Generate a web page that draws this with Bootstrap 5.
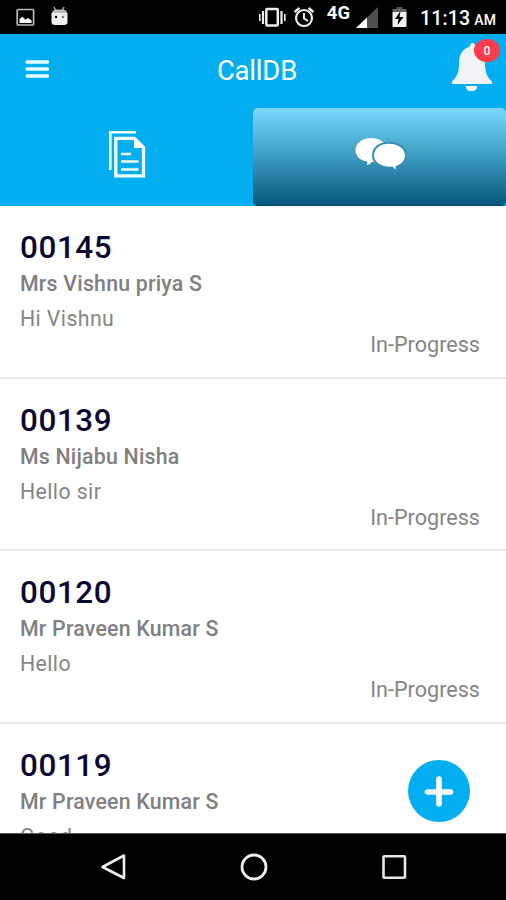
<!DOCTYPE html>
<html lang="en">
<head>
<meta charset="utf-8">
<meta name="viewport" content="width=device-width, initial-scale=1">
<title>CallDB</title>
<link href="https://cdn.jsdelivr.net/npm/bootstrap@5.3.0/dist/css/bootstrap.min.css" rel="stylesheet">
<style>
body { font-family: Roboto, "Liberation Sans", sans-serif; height: 900px; line-height: 1; }
svg { display: block; flex: none; }
.status-bar { height: 34px; padding: 0 10px 0 16px; }
.status-left { gap: 16px; padding-top: 5px; }
.net { font-size: 18.5px; font-weight: 700; line-height: 20px; margin: 3px 5px 0 12px; }
.clock { font-size: 19.6px; font-weight: 500; line-height: 24px; margin: 7px 0 0 13px; letter-spacing: .1px; }
.clock span { font-size: 14px; margin-left: -1px; }
.app-bar { height: 74px; background: #02aeef; padding: 0 6px 0 25px; }
.app-title { font-size: 27.5px; line-height: 74px; letter-spacing: -.2px; padding-left: 15px; }
.bell-btn { width: 50px; height: 52px; margin-top: 5px; }
.count { top: 0; right: 0; width: 26px; height: 23px; background: #fc3d4b; font-size: 12px; font-weight: 500; border-radius: 50%; }
.tab-bar { height: 98px; background: #02aeef; }
.tab-on { background: linear-gradient(#7bd8fb 0, #6bcbee 12%, #3f9fc4 47%, #23799c 75%, #075b80 97%, #064a6b); border-radius: 5px; }
.calls { min-height: 0; }
.call { height: 172.6px; flex: none; padding: 24px 26px 0 20px; border-bottom: 2px solid #e8e8e8; color: #808080; }
.call-id { font-size: 31.4px; line-height: 36px; font-weight: 500; color: #0b0733; letter-spacing: .6px; }
.call-name { font-size: 21.3px; line-height: 26px; margin-top: 5px; font-weight: 500; letter-spacing: .22px; }
.call-text { font-size: 21.3px; line-height: 26px; margin-top: 9px; font-weight: 400; color: #858585; letter-spacing: .4px; }
.call-state { font-size: 21.6px; line-height: 26px; color: #858585; }
.add { right: 36px; bottom: 11px; width: 62px; height: 62px; background: #02aeef; }
.nav-keys { height: 67px; border-top: 1px solid #555; padding: 0 98px 0 100px; }
</style>
<script src="https://cdn.jsdelivr.net/npm/bootstrap@5.3.0/dist/js/bootstrap.bundle.min.js"></script>
</head>
<body class="d-flex flex-column overflow-hidden bg-white">
<header class="flex-shrink-0">
  <div class="status-bar d-flex bg-black text-white">
    <div class="status-left d-flex me-auto">
      <svg width="19" height="22" viewBox="0 0 19 22"><rect x="1.2" y="4.5" width="16.4" height="15.5" rx="1" fill="none" stroke="#b9b9b9" stroke-width="1.7"/><path d="M3.5 18v-4l3-2.2 3 3 2.5-1.7 3.6 2.4V18z" fill="#fff"/></svg>
      <svg width="17" height="22" viewBox="0 0 17 22"><path d="M3 2l2 4M13 2l-2 4" stroke="#aaa" stroke-width="1.5"/><path d="M1 8q0-3 4-3.500h7q4 .5 4 3.500z" fill="#bbb"/><path d="M.5 8h16v9q0 3-3.500 3H4q-3.500 0-3.500-3z" fill="#eee"/><circle cx="5" cy="12" r="1.2"/><circle cx="12" cy="12" r="1.200" fill="#777"/></svg>
    </div>
    <svg width="56" height="34" viewBox="0 0 56 34" fill="none" stroke="#eee"><rect x="7.300" y="9" width="11.500" height="16.500" rx="1" stroke-width="2.500"/><path d="M4 11v13M22.500 11v13" stroke-width="2.200"/><path d="M.8 14v7M25.800 14v7" stroke-width="1.600"/><circle cx="45" cy="18" r="8" stroke-width="2.200"/><path d="M45 13v5.500l4 2.500" stroke-width="2"/><path d="M35.500 12l5-4M54.500 12l-5-4" stroke-width="2.300"/></svg>
    <span class="net">4G</span>
    <svg width="23" height="34" viewBox="0 0 23 34"><path d="M1 28L23 7v21z" fill="#505050"/><path d="M1 28l11-10.500V28z" fill="#fff"/></svg>
    <svg width="29" height="34" viewBox="0 0 29 34"><path d="M18.500 7h6v3h-6z" fill="#555"/><path d="M14.500 9h14v3h-14z" fill="#666"/><path d="M14.500 12h14v14q0 1-1 1h-12q-1 0-1-1z" fill="#f1f1f1"/><path d="M22.500 11l-5.500 8h3.500l-1 6 6-8h-4z" fill="#000"/></svg>
    <div class="clock text-nowrap">11:13 <span>AM</span></div>
  </div>
  <div class="app-bar d-flex text-white">
    <svg width="24" height="74" viewBox="0 0 24 74" stroke="#e8ffff" stroke-width="3.400" stroke-linecap="round"><path d="M2 28h20.500M2 35h20.500M2 42h20.500"/></svg>
    <div class="app-title flex-fill text-center">CallDB</div>
    <div class="bell-btn position-relative">
      <svg width="50" height="52" viewBox="0 0 50 52" fill="#eff3f5"><path d="M22.500 4q2.500 0 2.500 3.500c7 2 10 8 10 16 0 11 2 14 7 19v2.500H2v-2.500c5-5 7-8 7-19 0-8 4-14 11-16Q20 4 22.500 4zM15.500 47h12q-1 5.500-6 5.500t-6-5.500z"/></svg>
      <span class="count position-absolute d-flex align-items-center justify-content-center">0</span>
    </div>
  </div>
  <nav class="tab-bar d-flex">
    <div class="w-50 d-flex align-items-center justify-content-center">
      <svg width="38" height="54" viewBox="0 0 38 54" fill="none" stroke="#f2ffff"><path d="M2.300 40V2.200H28" stroke-width="2.600"/><path d="M7.800 8.300h18.700l9 9.200v28.300H7.800z" stroke-width="3.300"/><path d="M26 8v10h10z" fill="#fff" stroke="none"/><path d="M13 24h10M13 31.500h17.500M13 39.500h17.500" stroke-width="2.600"/></svg>
    </div>
    <div class="tab-on w-50 d-flex align-items-center justify-content-center">
      <svg width="52" height="42" viewBox="0 0 52 42" fill="#fff"><path d="M17.500 2C26 2 33 7 33 14s-7 12-15 12c-1 0-1.500 2.500-5 3l.5-3.500C6 24.500 1.500 20 1.500 14 1.500 7 8.500 2 17.500 2z"/><path d="M35 6.700c9 0 17 5 17 12.800 0 5.500-4 10-9.500 11.500l1 4c-3-.8-4.500-2.500-5.500-3.500-10 1-19-4-19-12s7-12.800 16-12.800z" stroke="#358eb2" stroke-width="2"/></svg>
    </div>
  </nav>
</header>
<main class="calls flex-fill position-relative overflow-hidden d-flex flex-column">
  <section class="call"><div class="call-id">00145</div><div class="call-name">Mrs Vishnu priya S</div><div class="call-text">Hi Vishnu</div><div class="call-state text-end">In-Progress</div></section>
  <section class="call"><div class="call-id">00139</div><div class="call-name">Ms Nijabu Nisha</div><div class="call-text">Hello sir</div><div class="call-state text-end">In-Progress</div></section>
  <section class="call"><div class="call-id">00120</div><div class="call-name">Mr Praveen Kumar S</div><div class="call-text">Hello</div><div class="call-state text-end">In-Progress</div></section>
  <section class="call"><div class="call-id">00119</div><div class="call-name">Mr Praveen Kumar S</div><div class="call-text">Good</div></section>
  <div class="add position-absolute rounded-circle d-flex align-items-center justify-content-center">
    <svg width="30" height="32" viewBox="0 0 30 32" stroke="#fff" stroke-width="5.600" stroke-linecap="round"><path d="M15 4v25M3.500 17h23"/></svg>
  </div>
</main>
<footer class="nav-keys flex-shrink-0 bg-black d-flex align-items-center justify-content-between">
  <svg width="28" height="28" viewBox="0 0 28 28" fill="none" stroke="#eee" stroke-width="2.600" stroke-linejoin="round"><path d="M2.500 14L24 2.500v22.500z"/></svg>
  <svg width="28" height="28" viewBox="0 0 28 28" fill="none" stroke="#eee" stroke-width="2.800"><circle cx="14" cy="14" r="12"/></svg>
  <svg width="28" height="28" viewBox="0 0 28 28" fill="none" stroke="#e6e6e6" stroke-width="2.600"><rect x="3.500" y="3.200" width="21.500" height="21.500" rx="1"/></svg>
</footer>
</body>
</html>
